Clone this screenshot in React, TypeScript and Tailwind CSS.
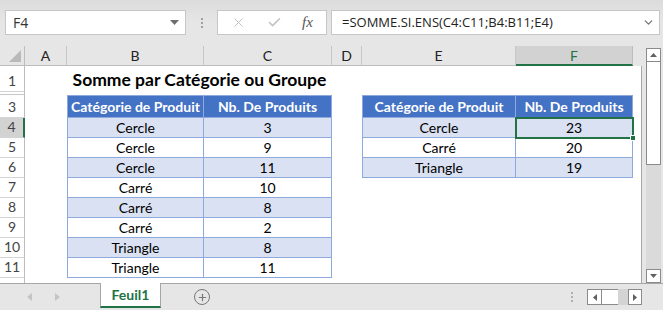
import { X, Check, ChevronDown, Plus } from 'lucide-react';

type Cell = { text?: string; kind?: 'head' | 'band' | 'plain'; first?: boolean; top?: boolean };

const COLS = [42, 137, 128, 30, 154, 117, 9];
const LETTERS = ['A', 'B', 'C', 'D', 'E', 'F', ''];

const leftData: [string, string][] = [
  ['Cercle', '3'],
  ['Cercle', '9'],
  ['Cercle', '11'],
  ['Carré', '10'],
  ['Carré', '8'],
  ['Carré', '2'],
  ['Triangle', '8'],
  ['Triangle', '11'],
];

const rightData: [string, string][] = [
  ['Cercle', '23'],
  ['Carré', '20'],
  ['Triangle', '19'],
];

function RowHead({ n, h, active }: { n: string; h: string; active?: boolean }) {
  return (
    <div
      className={`w-[25px] shrink-0 flex items-end justify-center pb-[1px] border-b border-[#d4d4d4] text-[14px] leading-[18px] text-[#444] ${h} ${
        active ? 'bg-[#d2d2d2] border-r-2 border-r-[#217346]' : 'border-r border-r-[#bdbdbd]'
      }`}
    >
      {n}
    </div>
  );
}

function TCell({ cell, w }: { cell: Cell; w: number }) {
  const k = cell.kind;
  const base = 'flex items-end justify-center pb-[1px] shrink-0 h-full text-[14px] leading-[17px] whitespace-nowrap';
  if (!k) return <div className={base} style={{ width: w }} />;
  const bg = k === 'head' ? 'bg-[#4472c4] text-white font-bold pb-[2px]' : k === 'band' ? 'bg-[#d9e1f2] text-black' : 'bg-white text-black';
  return (
    <div
      className={`${base} ${bg} border-r border-b border-[#8ea9db] ${cell.first ? 'border-l' : ''} ${cell.top ? 'border-t' : ''}`}
      style={{ width: w }}
    >
      {cell.text}
    </div>
  );
}

function SheetRow({ n, h, cells, active }: { n: string; h: string; cells: Cell[]; active?: boolean }) {
  return (
    <div className={`flex ${h}`}>
      <RowHead n={n} h={h} active={active} />
      {cells.map((c, i) => (
        <TCell key={i} cell={c} w={COLS[i]} />
      ))}
    </div>
  );
}

export default function App() {
  const dataRows = leftData.map(([cat, nb], i) => {
    const kind: Cell['kind'] = i % 2 === 0 ? 'band' : 'plain';
    const r = rightData[i];
    const cells: Cell[] = [
      {},
      { text: cat, kind, first: true },
      { text: nb, kind },
      {},
      r ? { text: r[0], kind, first: true } : {},
      r ? { text: r[1], kind } : {},
      {},
    ];
    return { n: String(i + 4), cells };
  });

  return (
    <div className="w-[663px] h-[310px] bg-[#e6e6e6] overflow-hidden font-['Lato',sans-serif] text-black">
      {/* formula bar */}
      <div className="h-[46px] flex items-start pt-[10px] bg-gradient-to-b from-[#dcdcdc] via-[#e6e6e6] to-[#e6e6e6] font-['Open_Sans',sans-serif]">
        <div className="ml-[5px] w-[181px] h-[25px] bg-white border border-[#c6c6c6] flex items-center pl-[7px] pr-[6px] text-[14px] text-[#333]">
          <span className="flex-1">F4</span>
          <svg width="9" height="5" viewBox="0 0 9 5">
            <polygon points="0,0 9,0 4.5,5" fill="#6e6e6e" />
          </svg>
        </div>
        <div className="w-[31px] h-[25px] flex flex-col items-center justify-center gap-[2px]">
          <span className="w-[2px] h-[2px] bg-[#a0a0a0]" />
          <span className="w-[2px] h-[2px] bg-[#a0a0a0]" />
          <span className="w-[2px] h-[2px] bg-[#a0a0a0]" />
        </div>
        <div className="w-[110px] h-[25px] bg-white border border-[#c6c6c6] flex items-center">
          <X className="ml-[13px] w-[15px] h-[15px] text-[#c3c3c3]" strokeWidth={1.6} />
          <Check className="ml-[21px] w-[15px] h-[15px] text-[#c3c3c3]" strokeWidth={2.6} />
          <span className="ml-[20px] font-['Liberation_Serif',serif] italic text-[15px] text-[#555]">fx</span>
        </div>
        <div className="ml-[4px] w-[329px] h-[25px] bg-white border border-[#c6c6c6] flex items-center pl-[10px] pr-[4px] text-[13px] text-[#222]">
          <span className="flex-1">=SOMME.SI.ENS(C4:C11;B4:B11;E4)</span>
          <ChevronDown className="w-[13px] h-[13px] text-[#777]" strokeWidth={2.5} />
        </div>
      </div>

      {/* grid + vertical scrollbar */}
      <div className="flex h-[237px]">
        <div className="w-[642px] bg-white border-r border-[#a6a6a6] relative">
          {/* column headers */}
          <div className="flex h-[20px] bg-[#e6e6e6]">
            <div className="w-[25px] shrink-0 border-r border-b border-[#bdbdbd] flex items-end justify-end pr-[3px] pb-[3px]">
              <svg width="12" height="12" viewBox="0 0 12 12">
                <polygon points="12,0 12,12 0,12" fill="#b9b9b9" />
              </svg>
            </div>
            {COLS.map((w, i) => (
              <div
                key={i}
                style={{ width: w }}
                className={`shrink-0 flex items-center justify-center text-[14px] ${
                  LETTERS[i] === 'F'
                    ? 'bg-[#d2d2d2] text-[#217346] border-b-2 border-[#217346] border-r border-r-[#bdbdbd]'
                    : LETTERS[i]
                    ? 'text-[#222] border-r border-[#c6c6c6] border-b border-b-[#bdbdbd]'
                    : 'bg-[#e6e6e6]'
                }`}
              >
                {LETTERS[i]}
              </div>
            ))}
          </div>

          {/* row 1 title */}
          <div className="flex h-[26px]">
            <RowHead n="1" h="h-[26px]" />
            <div className="w-[42px]" />
            <div className="w-[265px] flex items-end justify-center pb-[1px] text-[17.5px] leading-[22px] font-bold whitespace-nowrap">
              Somme par Catégorie ou Groupe
            </div>
          </div>

          {/* hidden row 2 */}
          <div className="flex h-[3px]">
            <div className="w-[25px] border-r border-r-[#bdbdbd] border-b border-[#c6c6c6]" />
          </div>

          {/* row 3 table headers */}
          <SheetRow
            n="3"
            h="h-[23px]"
            cells={[
              {},
              { text: 'Catégorie de Produit', kind: 'head', first: true, top: true },
              { text: 'Nb. De Produits', kind: 'head', top: true },
              {},
              { text: 'Catégorie de Produit', kind: 'head', first: true, top: true },
              { text: 'Nb. De Produits', kind: 'head', top: true },
              {},
            ]}
          />

          {dataRows.map((r, i) => (
            <SheetRow key={r.n} n={r.n} h="h-[20px]" cells={r.cells} active={i === 0} />
          ))}

          {/* partial row 12 */}
          <div className="flex h-[5px]">
            <div className="w-[25px] border-r border-r-[#bdbdbd]" />
          </div>

          {/* active cell F4 */}
          <div className="absolute left-[515px] top-[71px] w-[119px] h-[22px] border-2 border-[#217346]">
            <div className="absolute -right-[4px] -bottom-[4px] w-[6px] h-[6px] bg-[#217346] border border-white" />
          </div>
        </div>

        {/* vertical scrollbar */}
        <div className="ml-[4px] w-[15px] pt-[2px] flex flex-col">
          <div className="h-[14px] bg-white border border-[#8a8a8a] flex items-center justify-center">
            <svg width="7" height="4" viewBox="0 0 7 4">
              <polygon points="0,4 7,4 3.5,0" fill="#606060" />
            </svg>
          </div>
          <div className="h-[103px] bg-white border border-t-0 border-[#8a8a8a]" />
          <div className="flex-1 bg-[#dadada]" />
          <div className="h-[14px] bg-white border border-[#8a8a8a] flex items-center justify-center">
            <svg width="7" height="4" viewBox="0 0 7 4">
              <polygon points="0,0 7,0 3.5,4" fill="#606060" />
            </svg>
          </div>
        </div>
      </div>

      {/* sheet tabs */}
      <div className="h-[27px] flex border-t border-[#a6a6a6]">
        <div className="w-[100px] flex items-center">
          <svg className="ml-[27px]" width="5" height="8" viewBox="0 0 5 8">
            <polygon points="5,0 5,8 0,4" fill="#c4c4c4" />
          </svg>
          <svg className="ml-[23px]" width="5" height="8" viewBox="0 0 5 8">
            <polygon points="0,0 0,8 5,4" fill="#c4c4c4" />
          </svg>
        </div>
        <div className="-mt-[1px] w-[61px] h-[25px] bg-white border-x border-[#a6a6a6] border-b-2 border-b-[#217346] flex items-center justify-center text-[14px] font-bold text-[#217346]">
          Feuil1
        </div>
        <div className="ml-[33px] flex items-center">
          <div className="w-[16px] h-[16px] rounded-full border-[1.5px] border-[#777] flex items-center justify-center">
            <Plus className="w-[11px] h-[11px] text-[#777]" strokeWidth={2.5} />
          </div>
        </div>
        <div className="ml-auto mr-[21px] flex items-center">
          <div className="flex flex-col gap-[2px] mr-[14px]">
            <span className="w-[2px] h-[2px] bg-[#b0b0b0]" />
            <span className="w-[2px] h-[2px] bg-[#b0b0b0]" />
            <span className="w-[2px] h-[2px] bg-[#b0b0b0]" />
          </div>
          <div className="w-[15px] h-[16px] bg-white border border-[#8a8a8a] flex items-center justify-center">
            <svg width="4" height="7" viewBox="0 0 4 7">
              <polygon points="4,0 4,7 0,3.5" fill="#606060" />
            </svg>
          </div>
          <div className="w-[16px] h-[16px] bg-white border-y border-[#8a8a8a]" />
          <div className="w-[10px] h-[16px] bg-[#d4d4d4]" />
          <div className="w-[14px] h-[16px] bg-white border border-[#8a8a8a] flex items-center justify-center">
            <svg width="4" height="7" viewBox="0 0 4 7">
              <polygon points="0,0 0,7 4,3.5" fill="#606060" />
            </svg>
          </div>
        </div>
      </div>
    </div>
  );
}
